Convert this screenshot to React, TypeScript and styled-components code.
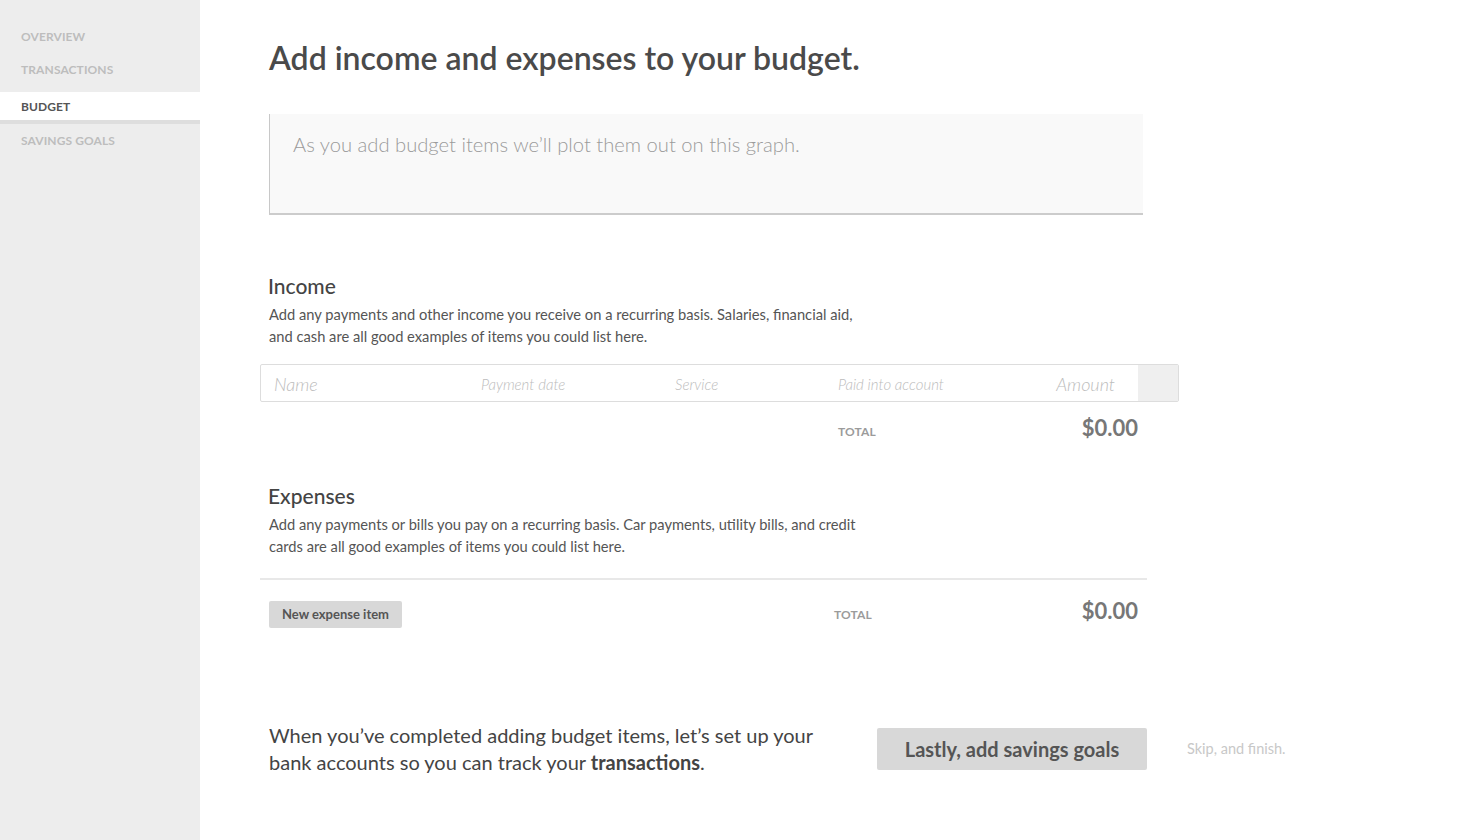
import styled, { createGlobalStyle } from 'styled-components'

const GlobalStyle = createGlobalStyle`
    html, body {
        margin: 0;
        padding: 0;
        background: #ffffff;
        font-family: Lato, "Noto Sans", "Liberation Sans", sans-serif;
        color: #4a4a4a;
    }
    * {
        box-sizing: border-box;
    }
`

const Page = styled.div`
    display: flex;
    width: 1460px;
    min-height: 840px;
`

const Sidebar = styled.nav`
    width: 200px;
    flex-shrink: 0;
    background: #ededed;
    padding-top: 20px;
    display: flex;
    flex-direction: column;
`

const NavItem = styled.a<{ $active?: boolean }>`
    display: block;
    height: ${p => (p.$active ? '32px' : '33px')};
    line-height: ${p => (p.$active ? '29px' : '33px')};
    margin-top: ${p => (p.$active ? '6px' : '0')};
    padding: 0 21px;
    font-size: 12px;
    font-weight: 700;
    letter-spacing: 0.1px;
    text-transform: uppercase;
    color: ${p => (p.$active ? '#555555' : '#bdbdbd')};
    background: ${p => (p.$active ? '#ffffff' : 'transparent')};
    border-bottom: ${p => (p.$active ? '4px solid #dedede' : 'none')};
    text-decoration: none;
`

const Main = styled.main`
    flex: 1;
    padding: 38px 0 0 69px;
`

const Title = styled.h1`
    margin: 0 0 36px;
    font-size: 32px;
    line-height: 40px;
    font-weight: 600;
    color: #4a4a4a;
`

const Graph = styled.div`
    width: 874px;
    height: 101px;
    background: #f9f9f9;
    border-left: 1px solid #c8c8c8;
    border-bottom: 2px solid #cccccc;
    padding: 18px 0 0 23px;
    font-size: 20.2px;
    font-weight: 300;
    color: #9b9b9b;
`

const Section = styled.section<{ $top: number }>`
    margin-top: ${p => p.$top}px;
`

const Heading = styled.h2`
    margin: 0 0 4px -1px;
    font-size: 21px;
    line-height: 26px;
    font-weight: 500;
    color: #444444;
`

const Desc = styled.p`
    margin: 0;
    width: 600px;
    font-size: 14.7px;
    line-height: 22px;
    font-weight: 400;
    color: #555555;
`

const TableRow = styled.div`
    display: flex;
    align-items: center;
    margin: 17px 0 0 -9px;
    width: 919px;
    height: 38px;
    border: 1px solid #dddddd;
    border-radius: 2px;
    overflow: hidden;
`

const Cell = styled.span<{ $w: number; $size?: number; $right?: boolean }>`
    width: ${p => p.$w}px;
    flex-shrink: 0;
    padding-top: 2px;
    font-size: ${p => p.$size ?? 15}px;
    font-style: italic;
    font-weight: 300;
    color: #bcbcbc;
    text-align: ${p => (p.$right ? 'right' : 'left')};
`

const RowAction = styled.span`
    margin-left: auto;
    width: 40px;
    height: 100%;
    background: #efefef;
`

const TotalRow = styled.div<{ $top: number }>`
    display: flex;
    align-items: baseline;
    width: 869px;
    margin-top: ${p => p.$top}px;
`

const TotalLabel = styled.span<{ $left: number }>`
    margin-left: ${p => p.$left}px;
    font-size: 12px;
    font-weight: 700;
    color: #9b9b9b;
    text-transform: uppercase;
    letter-spacing: 0.1px;
`

const TotalValue = styled.span`
    margin-left: auto;
    font-size: 22px;
    font-weight: 700;
    color: #777777;
`

const Divider = styled.hr`
    margin: 21px 0 0 -9px;
    width: 887px;
    border: none;
    border-top: 2px solid #e8e8e8;
`

const SmallButton = styled.button`
    height: 27px;
    padding: 0 13px;
    border: none;
    border-radius: 2px;
    background: #d8d8d8;
    font-family: inherit;
    font-size: 13px;
    font-weight: 700;
    color: #555555;
`

const Footer = styled.div`
    display: flex;
    align-items: center;
    margin-top: 94px;
`

const FooterText = styled.p`
    margin: 0;
    width: 608px;
    font-size: 20px;
    line-height: 27px;
    font-weight: 400;
    color: #444444;

    span {
        display: block;
    }

    strong {
        font-weight: 700;
    }
`

const BigButton = styled.button`
    width: 270px;
    height: 42px;
    border: none;
    border-radius: 2px;
    background: #d8d8d8;
    font-family: inherit;
    font-size: 20px;
    font-weight: 700;
    color: #555555;
`

const SkipLink = styled.a`
    margin-left: 40px;
    font-size: 14.5px;
    color: #c8c8c8;
    text-decoration: none;
`

export default function App() {
    return (
        <Page>
            <GlobalStyle />
            <Sidebar>
                <NavItem>Overview</NavItem>
                <NavItem>Transactions</NavItem>
                <NavItem $active>Budget</NavItem>
                <NavItem>Savings goals</NavItem>
            </Sidebar>
            <Main>
                <Title>Add income and expenses to your budget.</Title>
                <Graph>As you add budget items we’ll plot them out on this graph.</Graph>

                <Section $top={58}>
                    <Heading>Income</Heading>
                    <Desc>
                        Add any payments and other income you receive on a recurring basis. Salaries,
                        financial aid, and cash are all good examples of items you could list here.
                    </Desc>
                    <TableRow>
                        <Cell $w={220} $size={18} style={{ paddingLeft: 13 }}>Name</Cell>
                        <Cell $w={194}>Payment date</Cell>
                        <Cell $w={163}>Service</Cell>
                        <Cell $w={170}>Paid into account</Cell>
                        <Cell $w={107} $size={18} $right>Amount</Cell>
                        <RowAction />
                    </TableRow>
                    <TotalRow $top={12}>
                        <TotalLabel $left={569}>Total</TotalLabel>
                        <TotalValue>$0.00</TotalValue>
                    </TotalRow>
                </Section>

                <Section $top={42}>
                    <Heading>Expenses</Heading>
                    <Desc>
                        Add any payments or bills you pay on a recurring basis. Car payments, utility
                        bills, and credit cards are all good examples of items you could list here.
                    </Desc>
                    <Divider />
                    <TotalRow $top={17}>
                        <SmallButton>New expense item</SmallButton>
                        <TotalLabel $left={432}>Total</TotalLabel>
                        <TotalValue>$0.00</TotalValue>
                    </TotalRow>
                </Section>

                <Footer>
                    <FooterText>
                        <span>When you’ve completed adding budget items, let’s set up your</span>
                        <span>
                            bank accounts so you can track your <strong>transactions</strong>.
                        </span>
                    </FooterText>
                    <BigButton>Lastly, add savings goals</BigButton>
                    <SkipLink>Skip, and finish.</SkipLink>
                </Footer>
            </Main>
        </Page>
    )
}
